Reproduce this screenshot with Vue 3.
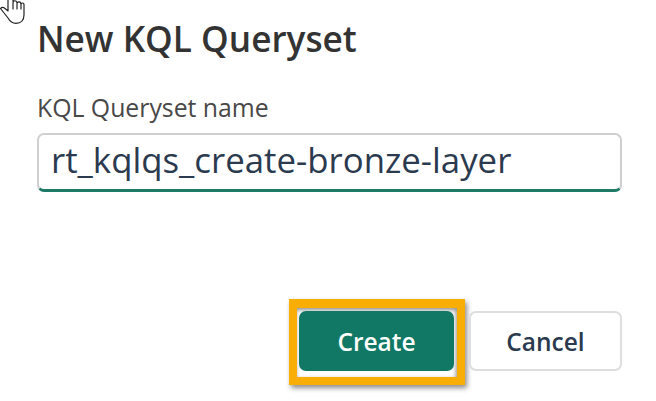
<script setup>
const title = 'New KQL Queryset'
const label = 'KQL Queryset name'
const name = 'rt_kqlqs_create-bronze-layer'
</script>

<template>
  <div class="page">
    <svg class="cursor" width="26" height="25" viewBox="0 0 26 25" fill="#fff" stroke="#222" stroke-width="1.2" stroke-linejoin="round" stroke-linecap="round">
      <path d="M8 -3V11L5 8.500C3.500 7.200 1.500 7.500 0.500 8.500L8 18C10 21.500 12.500 23.300 16 23.300C21 23.300 24 20 24 15V4.500C24 2.500 21 2.500 21 4.500V9M21 4.500C21 1 17 1 17 4V9M17 3C17 0 13 0 13 3V9M13 1V-3" />
    </svg>
    <h1 class="title">{{ title }}</h1>
    <label class="label">{{ label }}</label>
    <div class="field">{{ name }}</div>
    <div class="actions">
      <div class="highlight">
        <button class="btn primary">Create</button>
      </div>
      <button class="btn cancel">Cancel</button>
    </div>
  </div>
</template>

<style>
html, body {
  margin: 0;
  background: #fff;
}
</style>

<style scoped>
.page {
  position: relative;
  box-sizing: border-box;
  width: 656px;
  height: 401px;
  padding: 17px 34px 0 37px;
  overflow: hidden;
  background: #fff;
  font-family: "Open Sans", "Noto Sans", sans-serif;
}
.cursor {
  position: absolute;
  left: 0;
  top: 0;
}
.title {
  margin: 0 0 32px;
  font-size: 35.200px;
  line-height: 42px;
  font-weight: 600;
  color: #333;
}
.label {
  display: block;
  margin-bottom: 10px;
  font-size: 24.800px;
  line-height: 32px;
  color: #484848;
}
.field {
  box-sizing: border-box;
  height: 59px;
  padding-left: 12px;
  border: 2px solid #cfcfcf;
  border-bottom: 3px solid #1f7a68;
  border-radius: 7px;
  font-size: 34.800px;
  line-height: 50px;
  color: #2b3a4e;
}
.actions {
  display: flex;
  justify-content: flex-end;
  align-items: flex-start;
  gap: 4px;
  margin-top: 107px;
}
.highlight {
  display: flex;
  box-sizing: border-box;
  width: 176px;
  height: 86px;
  padding: 3px 3px 0 2px;
  border: 8px solid #f9ae06;
  border-top-width: 9px;
  box-shadow: 2px 3px 5px rgba(0, 0, 0, 0.45), inset -1px 2px 4px rgba(0, 0, 0, 0.45);
  align-items: flex-start;
}
.btn {
  box-sizing: border-box;
  height: 60px;
  border-radius: 7px;
  font-family: inherit;
  font-size: 24.500px;
  font-weight: 600;
}
.primary {
  width: 155px;
  border: none;
  background: #117865;
  color: #fff;
}
.cancel {
  width: 153px;
  margin-top: 12px;
  border: 2px solid #dedede;
  background: #fff;
  color: #2b3a4e;
}
</style>
